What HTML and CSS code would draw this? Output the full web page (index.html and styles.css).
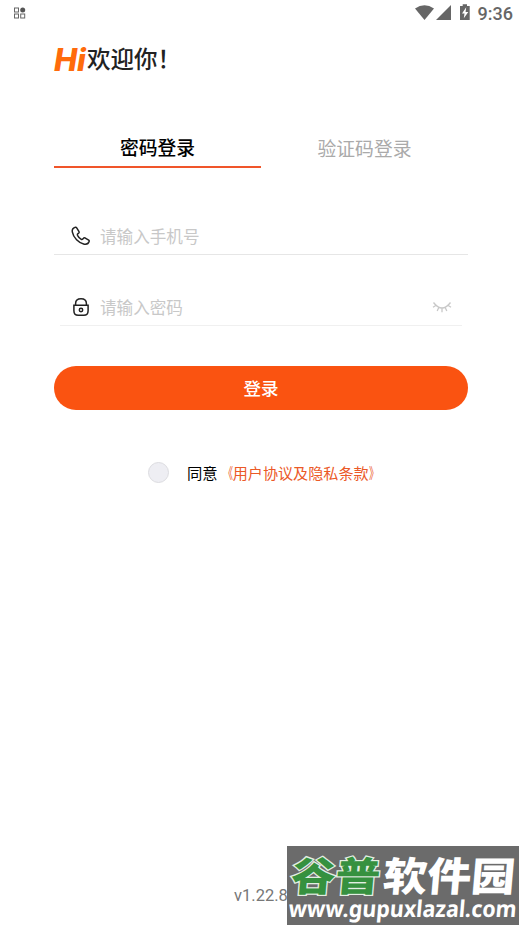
FILE: index.html
```
<!DOCTYPE html>
<html lang="zh-CN">
<head>
<meta charset="utf-8">
<title>登录</title>
<link rel="stylesheet" href="styles.css">
</head>
<body>
<div class="screen">
  <header class="status">
    <svg class="status-app" width="14" height="14" viewBox="0 0 14 14"><g fill="none" stroke="#666"><rect x="1.5" y="2" width="4" height="4"/><rect x="1.5" y="8" width="4" height="4"/><rect x="7.7" y="8" width="4" height="4"/></g><circle cx="9.7" cy="4" r="2.5" fill="#555"/></svg>
    <div class="status-right">
      <svg width="58" height="18" viewBox="0 0 58 18" fill="#666"><path d="M0 4.6Q9.5-2 19 4.6L9.5 16Z"/><path d="M21 16L36 1V16Z"/><path d="M45 2H47.7V0.3H52V2H54.7V16H45Z"/><path d="M51.2 3.3L47 9.6H49.5L48.8 14.3L53.3 7.9H50.6Z" fill="#fff"/></svg>
      <span class="clock">9:36</span>
    </div>
  </header>
  <main class="content">
    <h1 class="welcome"><span class="hi">Hi</span>欢迎你！</h1>
    <nav class="tabs">
      <div class="tab active">密码登录</div>
      <div class="tab">验证码登录</div>
    </nav>
    <div class="field">
      <svg class="icon" width="22" height="22" viewBox="0 0 22 22" fill="none" stroke="#222" stroke-width="1.5" stroke-linejoin="round"><path d="M5.4 2.2C3.3 2.6 1.8 4.4 2.3 6.8C3.5 12.8 8.5 18 14.2 19.2C16.8 19.7 18.6 18.4 19.2 16.3C19.3 15.9 19.1 15.5 18.7 15.2L14.9 12.9C14.4 12.6 13.8 12.8 13.5 13.2L12.8 14C12.3 14.6 11.7 14.6 11 14.1C9.5 13.2 8.3 11.8 7.5 10.3C7.2 9.6 7.3 9.1 7.9 8.7L8.7 8.1C9.2 7.7 9.3 7.2 9 6.7L6.7 2.8C6.4 2.3 6 2.1 5.4 2.2Z"/></svg>
      <span class="hint">请输入手机号</span>
    </div>
    <div class="field password">
      <svg class="icon" width="22" height="22" viewBox="0 0 22 22" fill="none" stroke="#222" stroke-width="1.5"><path d="M3.9 9.2H18.1V14.7Q18.1 19.3 13.8 19.3H8.2Q3.9 19.3 3.9 14.7Z"/><path d="M5.6 9V7.5C5.6 4.6 7.8 2.7 11 2.7S16.4 4.6 16.4 7.5V9"/><circle cx="11" cy="14" r="1.7"/></svg>
      <span class="hint">请输入密码</span>
      <svg class="eye" width="20" height="14" viewBox="0 0 20 14" fill="none" stroke="#c8c8c8" stroke-width="1.3"><path d="M1.5 2.5Q10 13.5 18.5 2.5M3.8 5.5L1 7.3M6.8 7.5L5.2 11M10 8.2V12.2M13.2 7.5L14.8 11M16.2 5.5L19 7.3"/></svg>
    </div>
    <div class="button">登录</div>
    <div class="agree"><span class="radio"></span><span>同意</span><span class="terms"><span class="open">《</span>用户协议及隐私条款<span class="close">》</span></span></div>
  </main>
  <footer class="version">v1.22.8</footer>
  <svg class="watermark" width="232" height="79" viewBox="0 0 232 79">
    <rect width="232" height="79" fill="#6b6b6b"/>
    <g transform="translate(0 46) skewX(-5)">
      <text class="mark green" x="3" y="-1" textLength="89" lengthAdjust="spacingAndGlyphs">谷普</text>
      <text class="mark white" x="95" y="-1" textLength="132" lengthAdjust="spacingAndGlyphs">软件园</text>
    </g>
    <g transform="translate(0 71) skewX(-5)">
      <text class="site" x="1" y="0" textLength="228" lengthAdjust="spacingAndGlyphs">www.gupuxlazal.com</text>
    </g>
  </svg>
</div>
</body>
</html>
```
FILE: styles.css
```
* { box-sizing: border-box; }
body { margin: 0; background: #fff; font-family: Roboto, "Noto Sans CJK SC", sans-serif; color: #111; }
.screen { position: relative; width: 522px; height: 928px; display: flex; flex-direction: column; overflow: hidden; }
.status { height: 28px; display: flex; justify-content: space-between; padding: 4px 9px 0 13px; }
.status-app { margin-top: 2px; }
.status-right { display: flex; gap: 5px; }
.clock { font-size: 18px; line-height: 20px; font-weight: 500; color: #666; }
.content { padding: 0 54px; display: flex; flex-direction: column; flex: 1; }
.welcome { margin: 14px 0 0; height: 35px; line-height: 36px; font-size: 23.5px; font-weight: 500; color: #222; white-space: nowrap; display: flex; }
.hi { font-family: Inter, "Liberation Sans", sans-serif; font-weight: 800; font-style: italic; font-size: 31px; line-height: 35px; letter-spacing: -0.3px; color: #ff6b0b; width: 33px; }
.tabs { display: grid; grid-template-columns: 1fr 1fr; margin-top: 51px; height: 40px; }
.tab { text-align: center; font-size: 18.8px; line-height: 45px; height: 40px; color: #aaa; }
.tab.active { color: #000; font-weight: 500; line-height: 33px; padding-top: 5px; border-bottom: 2px solid #f0552a; }
.field { display: flex; align-items: center; height: 37px; margin-top: 50px; padding: 0 16px; border-bottom: 1px solid #e6e6e6; }
.field.password { margin: 34px 6px 0; padding: 0 10px; border-color: #f0f0f0; }
.icon { flex: none; margin-right: 8px; }
.hint { font-size: 16.6px; color: #c8c8c8; }
.eye { margin-left: auto; }
.button { height: 44px; margin-top: 40px; border-radius: 22px; background: #fa5311; color: #fff; text-align: center; line-height: 46px; font-size: 17.5px; font-weight: 500; }
.agree { display: flex; align-items: center; margin: 50px 0 0 94px; height: 24px; font-size: 15.3px; white-space: nowrap; color: #000; }
.radio { width: 21px; height: 21px; border-radius: 50%; background: #eeeef3; border: 1px solid #dcdce0; margin-right: 18px; }
.terms { color: #eb5927; font-size: 15.1px; }
.open, .close { display: inline-block; transform: scaleX(.65); }
.open { transform-origin: right; }
.close { transform-origin: left; }
.version { height: 42px; text-align: center; font-size: 16.5px; line-height: 20px; color: #777; }
.watermark { position: absolute; left: 287px; top: 846px; }
.mark { font-family: "Noto Sans CJK SC", sans-serif; font-weight: 900; font-size: 40px; paint-order: stroke; }
.green { fill: #36913f; stroke: #e2eee2; stroke-width: 2.5px; }
.white { fill: #fff; }
.site { font-family: "Noto Sans", sans-serif; font-weight: 700; font-size: 23px; fill: #fff; }
```
